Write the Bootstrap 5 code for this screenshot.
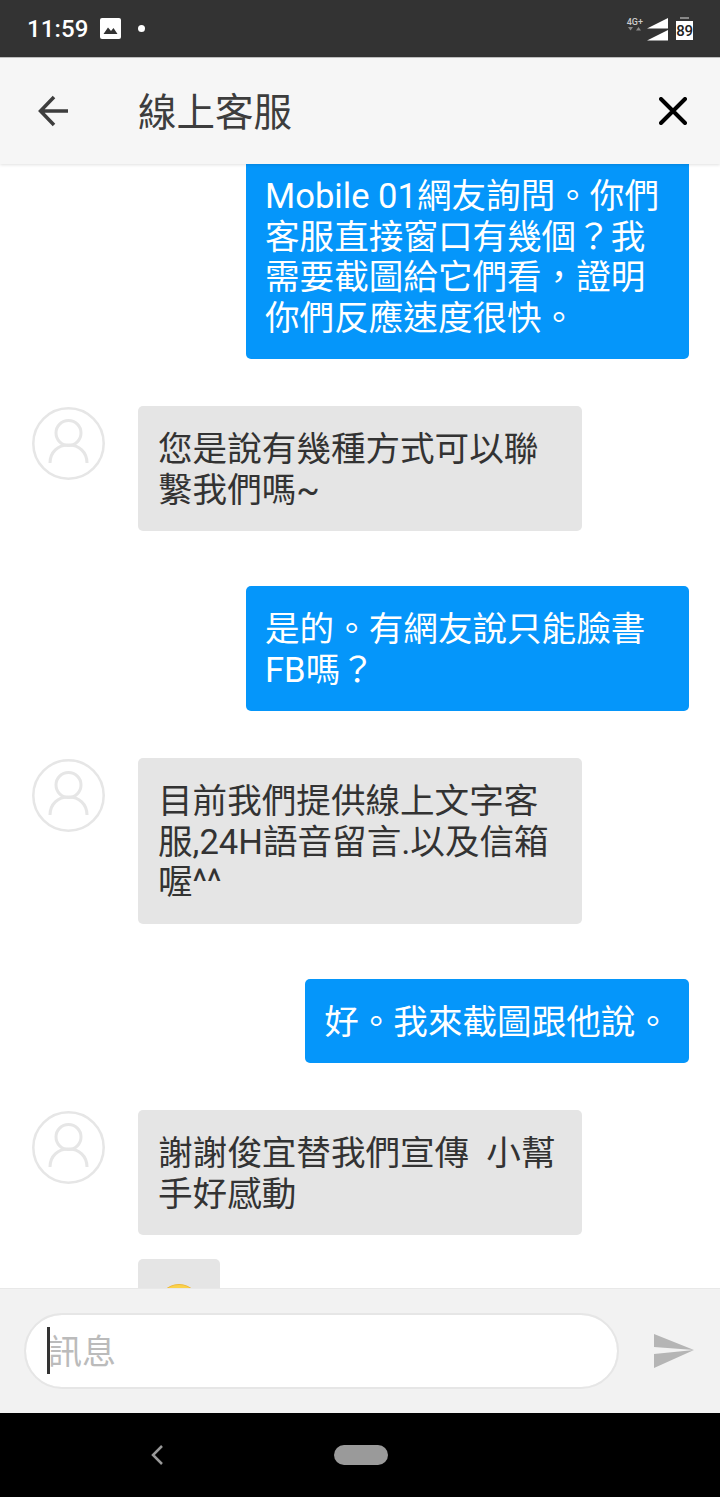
<!DOCTYPE html>
<html lang="zh-Hant">
<head>
    <meta charset="UTF-8">
    <meta name="viewport" content="width=device-width, initial-scale=1.0">
    <title>線上客服</title>
    <link href="https://cdn.jsdelivr.net/npm/bootstrap@5.3.0/dist/css/bootstrap.min.css" rel="stylesheet">
    <style>
        html, body {
            height: 100%;
        }
        body {
            font-family: Roboto, "Noto Sans CJK TC", sans-serif;
            background-color: #fff;
            overflow: hidden;
        }
        .status-bar {
            height: 57px;
            background-color: #333;
            color: #fff;
            padding: 0 27px;
        }
        .status-time {
            font-size: 24px;
            font-weight: 500;
            line-height: 1;
            letter-spacing: .1px;
        }
        .status-pic {
            margin-left: 11px;
        }
        .status-dot {
            width: 7px;
            height: 7px;
            margin-left: 16px;
            background-color: #fff;
            border-radius: 50%;
        }
        .net-label {
            font-size: 9px;
            font-weight: 500;
            line-height: 1;
            color: #ccc;
            margin: -9px 3px 0 0;
        }
        .batt-label {
            font-size: 15px;
            font-weight: 500;
            line-height: 1;
            letter-spacing: -.3px;
            color: #222;
            background-color: #fff;
            width: 17px;
            height: 19px;
            margin-top: 2px;
            text-align: center;
            padding-top: 3px;
        }
        .batt-cap {
            width: 9px;
            height: 2px;
            background-color: #888;
            margin: 0 auto;
        }
        .chat-header {
            height: 107px;
            background-color: #f6f6f6;
            border-top: 1px solid #bdbdbd;
            box-shadow: 0 1px 3px rgba(0, 0, 0, .12);
            padding: 0 33px 0 38px;
            position: relative;
            z-index: 2;
        }
        .chat-title {
            font-size: 38.5px;
            line-height: 1;
            color: #3d3d3d;
            margin: 4px 0 0 68px;
        }
        .chat-scroll {
            flex: 1 1 0;
            min-height: 0;
            overflow: hidden;
            padding: 0 31px 0 32px;
        }
        .msg-row {
            display: flex;
        }
        .msg-row.mine {
            justify-content: flex-end;
            margin-top: 55px;
        }
        .msg-row.theirs {
            margin-top: 47px;
        }
        .msg-row.follow {
            margin-top: 24px;
        }
        .msg-row.clipped {
            margin-top: -11px;
        }
        .msg-avatar {
            flex: 0 0 73px;
            width: 73px;
            height: 73px;
            margin: 1px 33px 0 0;
        }
        .msg-bubble {
            max-width: 444px;
            padding: 23px 20px 21px;
            font-size: 34.6px;
            line-height: 40.5px;
            border-radius: 5px;
        }
        .mine .msg-bubble {
            max-width: 443px;
            padding-left: 19px;
            padding-right: 19px;
            background-color: #0596fa;
            color: #fff;
        }
        .theirs .msg-bubble {
            background-color: #e5e5e5;
            color: #333;
        }
        .msg-spacer {
            flex: 0 0 106px;
        }
        .msg-emoji {
            margin-top: 2px;
        }
        .composer {
            height: 125px;
            background-color: #f2f2f2;
            border-top: 1px solid #e8e8e8;
            padding: 0 26px 0 24px;
            position: relative;
            z-index: 2;
        }
        .composer-field {
            width: 595px;
        }
        .composer-input.form-control {
            height: 76px;
            padding: 1px 22px 0;
            font-size: 34px;
            border: 2px solid #e6e6e6;
            box-shadow: none;
        }
        .composer-input::placeholder {
            color: #bbb;
            opacity: 1;
        }
        .composer-caret {
            left: 23px;
            top: 14px;
            width: 3px;
            height: 47px;
            background-color: #333;
        }
        .nav-strip {
            height: 84px;
            background-color: #000;
        }
        .nav-pill {
            width: 54px;
            height: 20px;
            background-color: #9a9a9a;
            border-radius: 10px;
        }
        .nav-back {
            margin-right: 170px;
        }
        .nav-gap {
            width: 182px;
        }
    </style>
</head>
<body class="d-flex flex-column">

    <!-- Status bar -->
    <div class="status-bar d-flex align-items-center flex-shrink-0">
        <span class="status-time">11:59</span>
        <svg class="status-pic" width="23" height="23" viewBox="0 0 23 23">
            <rect x="1" y="1" width="21" height="21" rx="2" fill="#fff"/>
            <path d="M4.500 17 L9 10.500 L12 14 L14.500 11 L18.500 17 Z" fill="#333"/>
        </svg>
        <span class="status-dot"></span>
        <div class="net-label ms-auto">
            <div>4G+</div>
            <svg class="d-block" width="15" height="4" viewBox="0 0 15 4">
                <path d="M1 0 H6 L3.500 3.500 Z M9 3.500 H14 L11.500 0 Z" fill="#8a8a8a"/>
            </svg>
        </div>
        <svg width="22" height="24" viewBox="0 0 22 24">
            <path d="M1 11.500 L22 1 V11.500 Z M1 23.500 L22 13 V23.500 Z" fill="#fff"/>
        </svg>
        <div class="ms-2">
            <div class="batt-cap"></div>
            <div class="batt-label">89</div>
        </div>
    </div>

    <!-- Header -->
    <div class="chat-header d-flex align-items-center flex-shrink-0">
        <svg width="32" height="32" viewBox="0 0 32 32">
            <path d="M30 16 H3 M16 2 L2.500 16 L16 30" fill="none" stroke="#3d3d3d" stroke-width="3.500"/>
        </svg>
        <div class="chat-title">線上客服</div>
        <svg class="ms-auto" width="28" height="28" viewBox="0 0 28 28">
            <path d="M2 2 L26 26 M26 2 L2 26" fill="none" stroke="#000" stroke-width="4" stroke-linecap="round"/>
        </svg>
    </div>

    <!-- Messages -->
    <div class="chat-scroll">
        <div class="msg-row mine clipped">
            <div class="msg-bubble">Mobile 01網友詢問。你們客服直接窗口有幾個？我需要截圖給它們看，證明你們反應速度很快。</div>
        </div>

        <div class="msg-row theirs">
            <svg class="msg-avatar" viewBox="0 0 73 73">
                <circle cx="36.500" cy="36.500" r="35.200" fill="#fff" stroke="#e6e6e6" stroke-width="2.500"/>
                <circle cx="36.500" cy="26" r="12.500" fill="none" stroke="#e6e6e6" stroke-width="3"/>
                <path d="M18 56 C18 45 26 38 36.500 38 C47 38 55 45 55 56" fill="none" stroke="#e6e6e6" stroke-width="3"/>
            </svg>
            <div class="msg-bubble">您是說有幾種方式可以聯繫我們嗎~</div>
        </div>

        <div class="msg-row mine">
            <div class="msg-bubble">是的。有網友說只能臉書FB嗎？</div>
        </div>

        <div class="msg-row theirs">
            <svg class="msg-avatar" viewBox="0 0 73 73">
                <circle cx="36.500" cy="36.500" r="35.200" fill="#fff" stroke="#e6e6e6" stroke-width="2.500"/>
                <circle cx="36.500" cy="26" r="12.500" fill="none" stroke="#e6e6e6" stroke-width="3"/>
                <path d="M18 56 C18 45 26 38 36.500 38 C47 38 55 45 55 56" fill="none" stroke="#e6e6e6" stroke-width="3"/>
            </svg>
            <div class="msg-bubble">目前我們提供線上文字客服,24H語音留言.以及信箱喔^^</div>
        </div>

        <div class="msg-row mine">
            <div class="msg-bubble">好。我來截圖跟他說。</div>
        </div>

        <div class="msg-row theirs">
            <svg class="msg-avatar" viewBox="0 0 73 73">
                <circle cx="36.500" cy="36.500" r="35.200" fill="#fff" stroke="#e6e6e6" stroke-width="2.500"/>
                <circle cx="36.500" cy="26" r="12.500" fill="none" stroke="#e6e6e6" stroke-width="3"/>
                <path d="M18 56 C18 45 26 38 36.500 38 C47 38 55 45 55 56" fill="none" stroke="#e6e6e6" stroke-width="3"/>
            </svg>
            <div class="msg-bubble">謝謝俊宜替我們宣傳&nbsp; 小幫手好感動</div>
        </div>

        <div class="msg-row theirs follow">
            <div class="msg-spacer"></div>
            <div class="msg-bubble">
                <svg class="msg-emoji d-block" width="42" height="42" viewBox="0 0 42 42">
                    <circle cx="21" cy="21" r="20.500" fill="#fbd24a" stroke="#eeb93a" stroke-width="1"/>
                </svg>
            </div>
        </div>
    </div>

    <!-- Message box -->
    <div class="composer d-flex align-items-center flex-shrink-0">
        <div class="composer-field position-relative">
            <input class="composer-input form-control rounded-pill" type="text" placeholder="訊息">
            <span class="composer-caret position-absolute"></span>
        </div>
        <svg class="ms-auto" width="40" height="36" viewBox="0 0 40 36">
            <path d="M0 1 L40 17 L0 14 Z M0 35 L40 17 L0 21 Z" fill="#b5b5b5"/>
        </svg>
    </div>

    <!-- Nav bar -->
    <div class="nav-strip d-flex align-items-center justify-content-center flex-shrink-0">
        <svg class="nav-back" width="14" height="20" viewBox="0 0 14 20">
            <path d="M12 1 L3 10 L12 19" fill="none" stroke="#999" stroke-width="2.500"/>
        </svg>
        <span class="nav-pill"></span>
        <span class="nav-gap"></span>
    </div>

</body>
</html>
